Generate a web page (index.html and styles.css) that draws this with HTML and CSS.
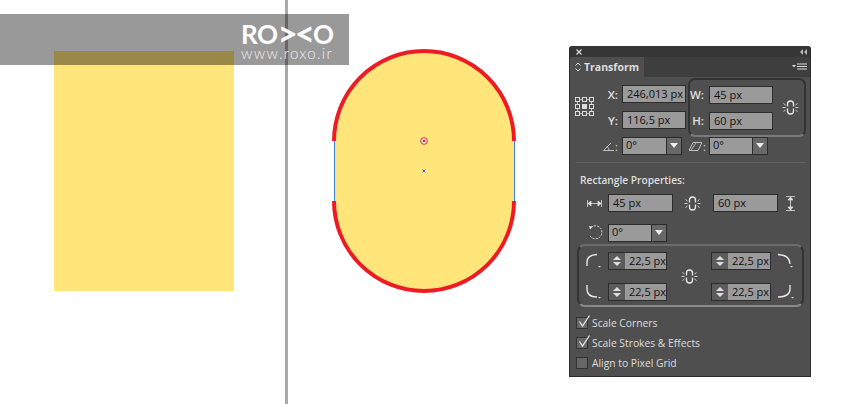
FILE: index.html
```html
<!DOCTYPE html>
<html lang="en">

<head>
  <meta charset="UTF-8">
  <title>Transform</title>
  <link rel="stylesheet" href="styles.css">
</head>

<body>
  <svg width="0" height="0" class="defs">
    <symbol id="link" viewBox="0 0 17 17">
      <path d="M5.500 7.500V5a3 3 0 0 1 6 0v2.500M5.500 9.500V12a3 3 0 0 0 6 0V9.500" fill="none" stroke="#e8e8e8" stroke-width="1.300" />
      <path d="M3.500 8.500H.5M16.500 8.500h-3M3.500 6 1.500 4.500M13.500 6l2-1.500M3.500 11l-2 1.500M13.500 11l2 1.500" stroke="#e0e0e0" fill="none" stroke-width=".9" />
    </symbol>
    <symbol id="corner-tl" viewBox="0 0 18 16">
      <path d="M2 13V9Q2 2 12 1.500" fill="none" stroke="#e6e6e6" stroke-width="1.400" />
      <path d="M13 13h3l-1.500 1.500z" fill="#e6e6e6" />
    </symbol>
    <symbol id="corner-tr" viewBox="0 0 18 16">
      <path d="M1 1.500Q13 2 13 11" fill="none" stroke="#e6e6e6" stroke-width="1.400" />
      <path d="M13 13h3l-1.500 1.500z" fill="#e6e6e6" />
    </symbol>
    <symbol id="corner-bl" viewBox="0 0 18 16">
      <path d="M2 1v4Q2 13 12 13" fill="none" stroke="#e6e6e6" stroke-width="1.400" />
      <path d="M13 13h3l-1.500 1.500z" fill="#e6e6e6" />
    </symbol>
    <symbol id="corner-br" viewBox="0 0 18 16">
      <path d="M13 1v4Q13 13 1 13" fill="none" stroke="#e6e6e6" stroke-width="1.400" />
      <path d="M14 13h3l-1.500 1.500z" fill="#e6e6e6" />
    </symbol>
    <symbol id="tick" viewBox="0 0 14 14">
      <path d="M2.500 7.500 5.500 12 12.500 1.500" fill="none" stroke="#e4e4e4" stroke-width="1.300" />
    </symbol>
  </svg>

  <!-- canvas -->
  <div class="rect"></div>
  <div class="guide"></div>

  <svg class="shape" width="190" height="250" viewBox="329 46 190 250">
    <path d="M334 141A90 90 0 0 1 514 141V201A90 90 0 0 1 334 201Z" fill="#ffe57a" />
    <path d="M334.500 141V201M514.500 141V201" stroke="#3f7fe8" fill="none" />
    <path d="M334 141A90 90 0 0 1 514 141M514 201A90 90 0 0 1 334 201" stroke="#ed1c24" stroke-width="4" fill="none" />
    <circle cx="424" cy="141" r="3.300" fill="#fff" stroke="#ed1c24" />
    <circle cx="424" cy="141" r="1.300" fill="#ed1c24" />
    <path d="M422.500 169.500l3 3M425.500 169.500l-3 3" stroke="#3f6fe0" fill="none" />
  </svg>

  <div class="band">
    <div class="logo">
      <div class="logo-name">RO<span class="chev">&gt;&lt;</span>O</div>
      <div class="logo-url">www.roxo.ir</div>
    </div>
  </div>

  <!-- transform panel -->
  <div class="panel">
    <div class="titlebar">
      <svg width="6" height="6" viewBox="0 0 6 6">
        <path d="M.5.5l5 5M5.500.5l-5 5" stroke="#ddd" stroke-width="1.200" />
      </svg>
      <svg width="7" height="6" viewBox="0 0 7 6">
        <path d="M3 0v6L0 3zM7 0v6L4 3z" fill="#bbb" />
      </svg>
    </div>
    <div class="tabbar">
      <div class="tab">
        <svg class="tab-arrows" width="6" height="10" viewBox="0 0 6 10">
          <path d="M.5 3.500 3 1l2.500 2.500M.5 6.500 3 9l2.500-2.500" fill="none" stroke="#ddd" />
        </svg>
        Transform
      </div>
      <svg class="menu-icon" width="15" height="8" viewBox="0 0 15 8">
        <path d="M0 2h4L2 4.500z" fill="#ddd" />
        <path d="M5 1h10M5 3.500h10M5 6h10" stroke="#ddd" />
      </svg>
    </div>

    <div class="top">
      <svg class="anchor" width="19" height="19" viewBox="0 0 19 19">
        <g fill="none" stroke="#dcdcdc">
          <path d="M5 2.500h2M12 2.500h2M5 16.500h2M12 16.500h2M2.500 5v2M16.500 5v2M2.500 12v2M16.500 12v2" stroke-width=".8" />
          <rect x=".5" y=".5" width="4" height="4" />
          <rect x="7.500" y=".5" width="4" height="4" />
          <rect x="14.500" y=".5" width="4" height="4" />
          <rect x=".5" y="7.500" width="4" height="4" />
          <rect x="14.500" y="7.500" width="4" height="4" />
          <rect x=".5" y="14.500" width="4" height="4" />
          <rect x="7.500" y="14.500" width="4" height="4" />
          <rect x="14.500" y="14.500" width="4" height="4" />
        </g>
        <rect x="7" y="7" width="5" height="5" fill="#dcdcdc" />
      </svg>
      <div class="xy">
        <div class="field"><label>X:</label><div class="input wide">246,013 px</div></div>
        <div class="field"><label>Y:</label><div class="input wide">116,5 px</div></div>
      </div>
      <div class="wh-box">
        <div class="wh-fields">
          <div class="field"><label class="short">W:</label><div class="input wide">45 px</div></div>
          <div class="field"><label class="short">H:</label><div class="input wide">60 px</div></div>
        </div>
        <svg class="link wh-link" width="17" height="17"><use href="#link" /></svg>
      </div>
    </div>

    <div class="angle-row">
      <div class="angle-label">
        <svg width="11" height="9" viewBox="0 0 11 9">
          <path d="M0.500 8.500H11M0.500 8.500 8 1M6 8.500Q6 6 4 4.500" fill="none" stroke="#d8d8d8" stroke-width=".8" />
        </svg>:
      </div>
      <div class="combo first"><span>0°</span><i></i></div>
      <div class="angle-label second">
        <svg width="13" height="9" viewBox="0 0 13 9">
          <path d="M4 .5h9L9 8.500H0zM2 8 7 1" fill="none" stroke="#d8d8d8" stroke-width=".8" />
        </svg>:
      </div>
      <div class="combo"><span>0°</span><i></i></div>
    </div>

    <div class="divider"></div>
    <div class="section-title">Rectangle Properties:</div>

    <div class="size-row">
      <svg width="15" height="7" viewBox="0 0 15 7">
        <path d="M.5 0v7M14.500 0v7M1 3.500h13M1 3.500 4 1v5zM14 3.500 11 1v5z" fill="#ddd" stroke="#ddd" stroke-width=".8" />
      </svg>
      <div class="input size">45 px</div>
      <svg class="link size-link" width="17" height="17"><use href="#link" /></svg>
      <div class="input size">60 px</div>
      <svg class="height-icon" width="9" height="15" viewBox="0 0 9 15">
        <path d="M0 .5h9M0 14.500h9M4.500 1v13M4.500 1 2 4h5zM4.500 14 2 11h5z" fill="#ddd" stroke="#ddd" stroke-width=".8" />
      </svg>
    </div>

    <div class="rotate-row">
      <svg width="15" height="15" viewBox="0 0 15 15">
        <path d="M3 2.500A6.500 6.500 0 1 1 1.500 10" fill="none" stroke="#ddd" stroke-dasharray="2 1.200" />
        <path d="M1 1l4 .5-3 3z" fill="#ddd" />
      </svg>
      <div class="combo"><span>0°</span><i></i></div>
    </div>

    <div class="corner-box">
      <svg class="corner" width="18" height="16"><use href="#corner-tl" /></svg>
      <div class="spinner"><div class="arrows"><b class="up"></b><b class="down"></b></div><span>22,5 px</span></div>
      <svg class="link corner-link" width="17" height="17"><use href="#link" /></svg>
      <div class="spinner"><div class="arrows"><b class="up"></b><b class="down"></b></div><span>22,5 px</span></div>
      <svg class="corner right" width="18" height="16"><use href="#corner-tr" /></svg>

      <svg class="corner" width="18" height="16"><use href="#corner-bl" /></svg>
      <div class="spinner"><div class="arrows"><b class="up"></b><b class="down"></b></div><span>22,5 px</span></div>
      <div class="spinner"><div class="arrows"><b class="up"></b><b class="down"></b></div><span>22,5 px</span></div>
      <svg class="corner right" width="18" height="16"><use href="#corner-br" /></svg>
    </div>

    <div class="checks">
      <div class="check">
        <span class="box"><svg width="14" height="14"><use href="#tick" /></svg></span>Scale Corners
      </div>
      <div class="check">
        <span class="box"><svg width="14" height="14"><use href="#tick" /></svg></span>Scale Strokes &amp; Effects
      </div>
      <div class="check"><span class="box"></span>Align to Pixel Grid</div>
    </div>
  </div>
</body>

</html>
```

FILE: styles.css
```css
html,
body {
  margin: 0;
  padding: 0;
  width: 850px;
  height: 404px;
  overflow: hidden;
  background-color: #fff;
}

.defs {
  position: absolute;
}

/* canvas */
.rect {
  position: absolute;
  left: 54px;
  top: 51px;
  width: 180px;
  height: 240px;
  background-color: #ffe57a;
}

.guide {
  position: absolute;
  left: 285px;
  top: 0;
  width: 3px;
  height: 404px;
  background-color: #aaa;
}

.shape {
  position: absolute;
  left: 329px;
  top: 46px;
}

.band {
  position: absolute;
  left: 0;
  top: 14px;
  width: 349px;
  height: 51px;
  background-color: rgba(0, 0, 0, .4);
}

.logo {
  position: absolute;
  left: 241px;
  top: 6px;
  width: 95px;
  color: #fff;
  font-family: "Lato", sans-serif;
}

.logo-name {
  height: 24px;
  font-size: 26px;
  line-height: 24px;
  font-weight: 700;
  letter-spacing: -.5px;
  white-space: nowrap;
}

.chev {
  margin: 0 1px 0 0;
  font-size: 35px;
  line-height: 24px;
  letter-spacing: -3px;
  vertical-align: -2px;
}

.logo-url {
  margin-top: 2px;
  height: 15px;
  font-size: 15px;
  line-height: 15px;
  font-weight: 300;
  letter-spacing: 1.300px;
  color: #eee;
}

/* panel */
.panel {
  position: absolute;
  left: 569px;
  top: 46px;
  box-sizing: border-box;
  width: 242px;
  height: 331px;
  border: 1px solid #2c2c2c;
  border-top: 0;
  border-radius: 3px 3px 0 0;
  background-color: #4f4f4f;
  color: #dedede;
  font-family: "Open Sans", sans-serif;
  font-size: 11px;
}

.titlebar {
  display: flex;
  justify-content: space-between;
  align-items: center;
  height: 11px;
  padding: 0 3px 0 6px;
  border-radius: 3px 3px 0 0;
  background-color: #363636;
}

.tabbar {
  display: flex;
  justify-content: space-between;
  align-items: center;
  height: 20px;
  padding-right: 3px;
  background-color: #3e3e3e;
}

.tab {
  display: flex;
  align-items: center;
  width: 74px;
  height: 20px;
  padding-left: 5px;
  box-sizing: border-box;
  background-color: #4f4f4f;
  font-size: 10.500px;
  font-weight: 700;
}

.tab-arrows {
  margin-right: 3px;
}

.top {
  display: flex;
  height: 59px;
  margin-top: 1px;
  padding-left: 5px;
}

.anchor {
  margin-top: 19px;
}

.xy {
  display: flex;
  flex-direction: column;
  gap: 8px;
  width: 92px;
  padding-top: 7px;
}

.field {
  display: flex;
  align-items: center;
}

.field label {
  box-sizing: border-box;
  width: 28px;
  padding-right: 4px;
  text-align: right;
  font-size: 11.500px;
  font-weight: 600;
}

.field label.short {
  width: 19px;
  padding-right: 5px;
}

.input {
  box-sizing: border-box;
  height: 18px;
  padding-left: 4px;
  border: 1px solid #2c2c2c;
  background-color: #9a9a9a;
  color: #111;
  line-height: 15px;
  white-space: nowrap;
}

.input.wide {
  width: 64px;
}

.input.size {
  width: 65px;
}

.wh-box {
  display: flex;
  align-items: center;
  box-sizing: border-box;
  width: 118px;
  height: 59px;
  margin-left: 2px;
  border: 2px solid #333;
  border-bottom-color: #7a7a7a;
  border-radius: 7px;
}

.wh-fields {
  display: flex;
  flex-direction: column;
  gap: 8px;
}

.wh-link {
  margin-left: 9px;
}

.angle-row {
  display: flex;
  align-items: center;
  height: 18px;
  padding-left: 33px;
}

.angle-label {
  display: flex;
  align-items: center;
  gap: 1px;
  width: 19px;
}

.angle-label.second {
  width: 20px;
  margin-left: 7px;
}

.combo {
  display: flex;
  box-sizing: border-box;
  width: 59px;
  height: 18px;
  border: 1px solid #2c2c2c;
  background-color: #9a9a9a;
  color: #111;
  line-height: 14px;
}

.combo.first {
  width: 60px;
}

.combo span {
  flex: 1;
  padding-left: 3px;
}

.combo i {
  position: relative;
  width: 14px;
  border-left: 1px solid #2c2c2c;
  background-color: #686868;
}

.combo i::after {
  content: "";
  position: absolute;
  left: 3px;
  top: 5px;
  border-style: solid;
  border-width: 5px 4px 0;
  border-color: #eee transparent transparent;
}

.divider {
  height: 1px;
  margin: 7px 5px 0;
  background-color: #626262;
}

.section-title {
  margin: 10px 0 0 10px;
  height: 14px;
  line-height: 14px;
  font-size: 10.200px;
  font-weight: 600;
}

.size-row {
  display: flex;
  align-items: center;
  height: 18px;
  margin-top: 7px;
  padding-left: 17px;
}

.size-row .input {
  margin-left: 6px;
}

.size-row .input + .size-link + .input {
  margin-left: 12px;
}

.size-link {
  margin-left: 11px;
}

.height-icon {
  margin-left: 8px;
}

.rotate-row {
  display: flex;
  align-items: center;
  gap: 5px;
  height: 19px;
  margin-top: 11px;
  padding-left: 18px;
}

.corner-box {
  display: grid;
  grid-template-columns: 24px 59px 44px 60px 25px;
  grid-template-rows: 18px 18px;
  row-gap: 13px;
  align-items: center;
  box-sizing: border-box;
  width: 227px;
  height: 63px;
  margin: 2px 0 0 7px;
  padding: 6px 0 0 5px;
  border: 2px solid #333;
  border-top-color: #6c6c6c;
  border-bottom-color: #8a8a8a;
  border-radius: 8px;
}

.corner {
  margin-left: 1px;
}

.corner.right {
  margin-left: 6px;
}

.corner-link {
  grid-column: 3;
  grid-row: 1 / span 2;
  justify-self: center;
}

.spinner {
  display: flex;
  box-sizing: border-box;
  height: 18px;
  border: 1px solid #2c2c2c;
  background-color: #9a9a9a;
  color: #111;
  line-height: 15px;
  white-space: nowrap;
  overflow: hidden;
}

.spinner span {
  padding-left: 4px;
}

.arrows {
  display: flex;
  flex: none;
  flex-direction: column;
  justify-content: center;
  align-items: center;
  gap: 2px;
  width: 16px;
  background-color: #5c5c5c;
}

.arrows b {
  border-style: solid;
  border-color: transparent;
}

.arrows .up {
  border-width: 0 4px 4px;
  border-bottom-color: #ddd;
}

.arrows .down {
  border-width: 4px 4px 0;
  border-top-color: #ddd;
}

.checks {
  display: flex;
  flex-direction: column;
  gap: 8px;
  margin: 10px 0 0 6px;
  font-size: 10.300px;
}

.check {
  display: flex;
  align-items: center;
  gap: 4px;
  height: 12px;
}

.box {
  position: relative;
  box-sizing: border-box;
  width: 12px;
  height: 12px;
  border: 1px solid #333;
  background-color: #666;
}

.box svg {
  position: absolute;
  left: 0;
  top: -4px;
}
```
